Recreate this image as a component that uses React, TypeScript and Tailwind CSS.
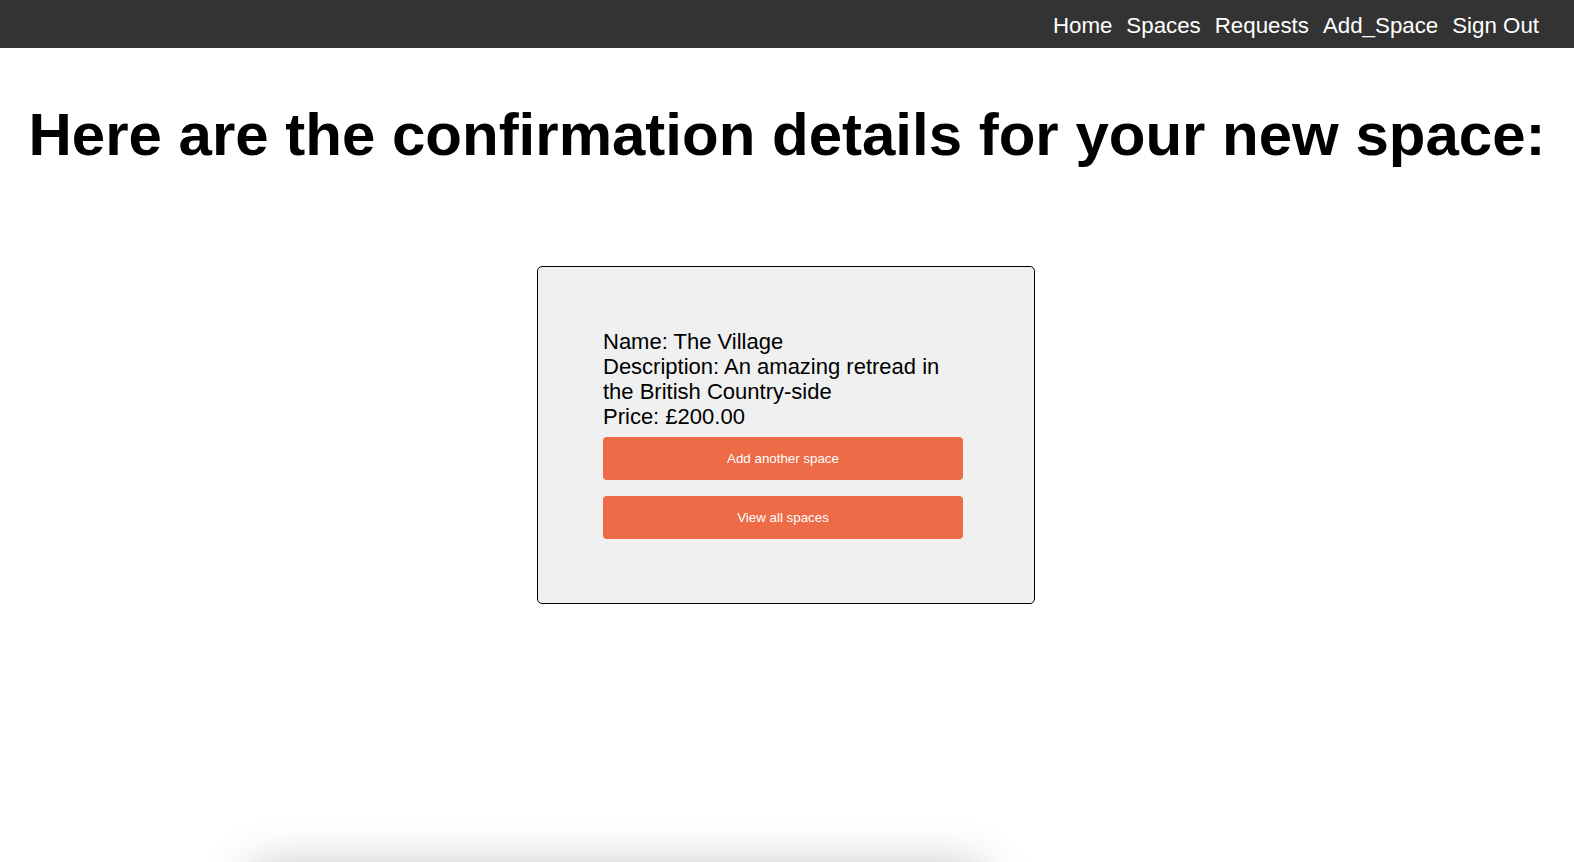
import React from "react";

export default function App() {
  const links = ["Home", "Spaces", "Requests", "Add_Space", "Sign Out"];
  return (
    <div className="min-h-[862px] bg-white text-black overflow-hidden" style={{ fontFamily: '"Liberation Sans", Arial, Helvetica, sans-serif' }}>
      <nav className="h-[48px] bg-[#333333] flex items-center justify-end pr-[28px]">
        {links.map((l) => (
          <a key={l} href="#" className="px-[7px] text-white text-[22.3px] leading-[25px] pt-[2px]">
            {l}
          </a>
        ))}
      </nav>
      <h1 className="mt-[52px] text-center font-bold text-[60px] leading-[69px] whitespace-nowrap">
        Here are the confirmation details for your new space:
      </h1>
      <div className="mt-[97px] mx-auto w-[498px] h-[338px] border border-black rounded-[5px] bg-[#f0f0f0] pt-[62px] pl-[65px] -translate-x-[1px]">
        <div className="w-[360px] text-[22px] leading-[25px]">
          <div>Name: The Village</div>
          <div>Description: An amazing retread in the British Country-side</div>
          <div>Price: £200.00</div>
        </div>
        <button className="mt-[8px] block h-[43px] w-[360px] rounded-[4px] bg-[#ed6b47] text-white text-[13.33px]">
          Add another space
        </button>
        <button className="mt-[16px] block h-[43px] w-[360px] rounded-[4px] bg-[#ed6b47] text-white text-[13.33px]">
          View all spaces
        </button>
      </div>
      <div className="mt-[267px] ml-[252px] w-[730px] h-[100px] bg-white shadow-[0_0_50px_rgba(0,0,0,0.3)]"></div>
    </div>
  );
}
